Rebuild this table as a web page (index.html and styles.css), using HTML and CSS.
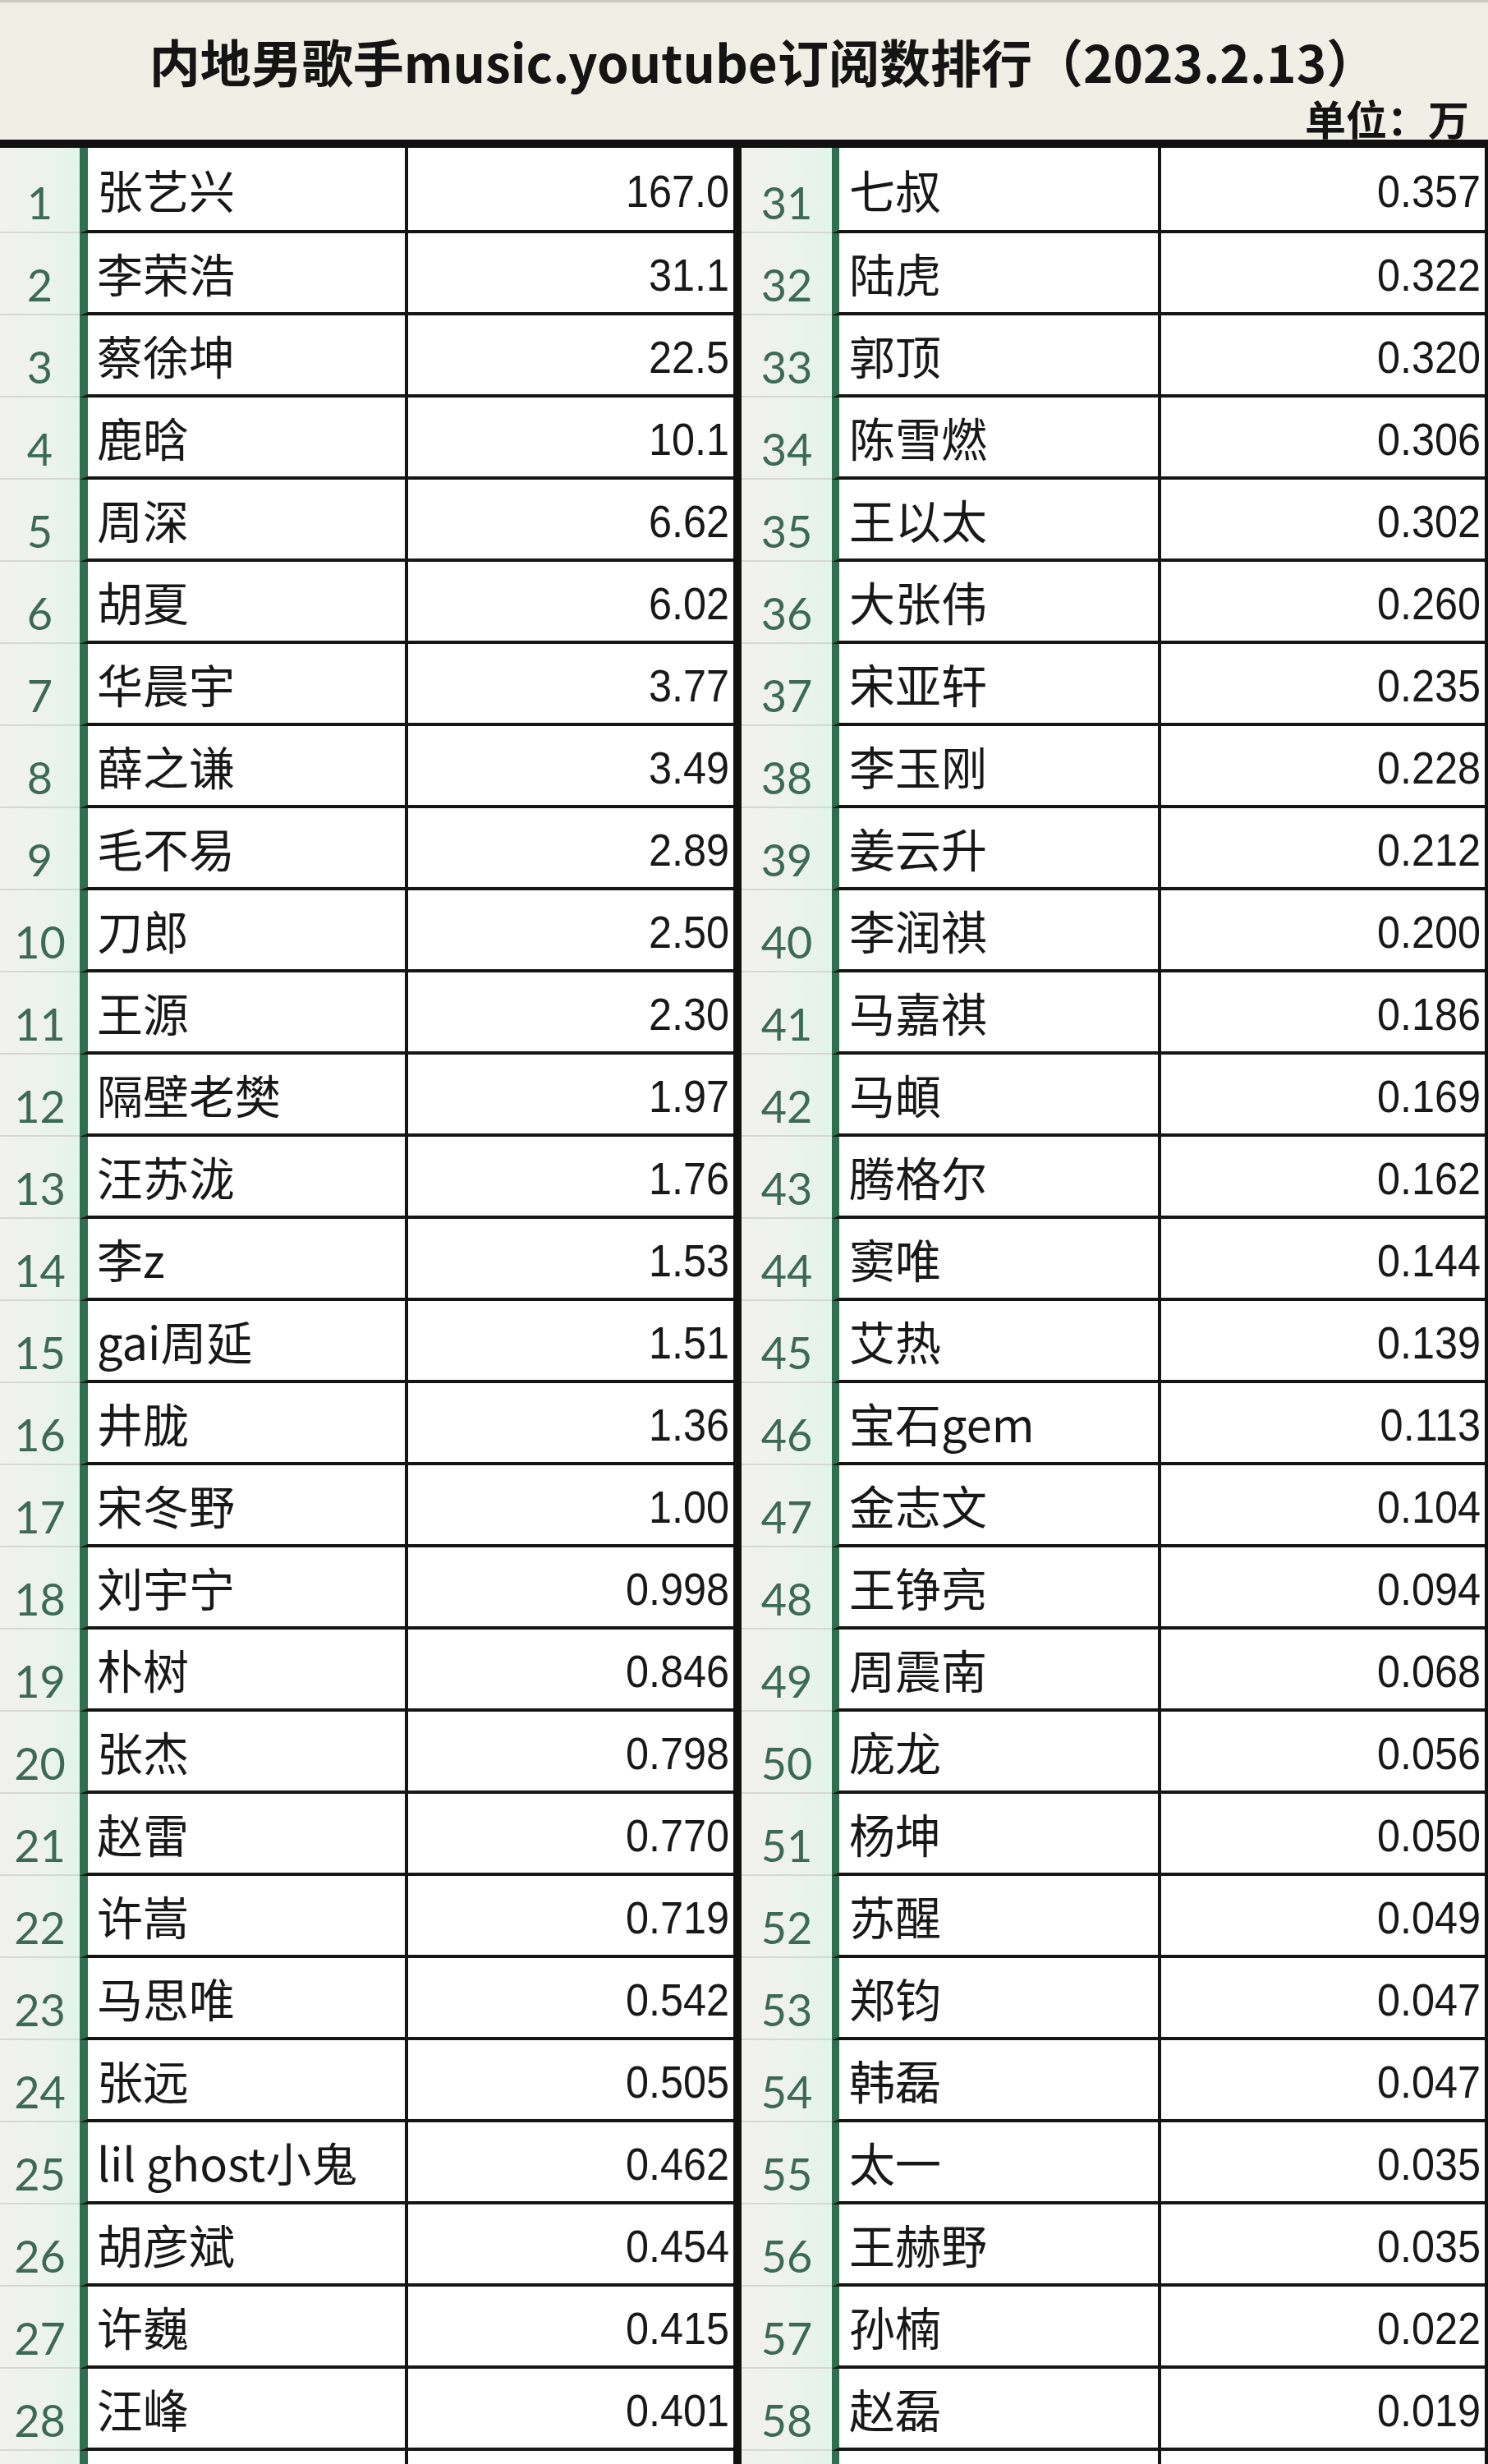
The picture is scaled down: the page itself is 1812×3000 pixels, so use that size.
FILE: index.html
```html
<!DOCTYPE html>
<html lang="zh-CN">
<head>
<meta charset="utf-8">
<title>内地男歌手music.youtube订阅数排行</title>
<link rel="stylesheet" href="styles.css">
</head>
<body>
<div class="page">
  <header class="head">
    <h1 class="title">内地男歌手music.youtube订阅数排行（2023.2.13）</h1>
    <div class="unit">单位：万</div>
  </header>
  <div class="table">
    <div class="half half-left">
      <div class="row"><div class="rank">1</div><div class="cells"><div class="name">张艺兴</div><div class="val"><span>167.0</span></div></div></div>
      <div class="row"><div class="rank">2</div><div class="cells"><div class="name">李荣浩</div><div class="val"><span>31.1</span></div></div></div>
      <div class="row"><div class="rank">3</div><div class="cells"><div class="name">蔡徐坤</div><div class="val"><span>22.5</span></div></div></div>
      <div class="row"><div class="rank">4</div><div class="cells"><div class="name">鹿晗</div><div class="val"><span>10.1</span></div></div></div>
      <div class="row"><div class="rank">5</div><div class="cells"><div class="name">周深</div><div class="val"><span>6.62</span></div></div></div>
      <div class="row"><div class="rank">6</div><div class="cells"><div class="name">胡夏</div><div class="val"><span>6.02</span></div></div></div>
      <div class="row"><div class="rank">7</div><div class="cells"><div class="name">华晨宇</div><div class="val"><span>3.77</span></div></div></div>
      <div class="row"><div class="rank">8</div><div class="cells"><div class="name">薛之谦</div><div class="val"><span>3.49</span></div></div></div>
      <div class="row"><div class="rank">9</div><div class="cells"><div class="name">毛不易</div><div class="val"><span>2.89</span></div></div></div>
      <div class="row"><div class="rank">10</div><div class="cells"><div class="name">刀郎</div><div class="val"><span>2.50</span></div></div></div>
      <div class="row"><div class="rank">11</div><div class="cells"><div class="name">王源</div><div class="val"><span>2.30</span></div></div></div>
      <div class="row"><div class="rank">12</div><div class="cells"><div class="name">隔壁老樊</div><div class="val"><span>1.97</span></div></div></div>
      <div class="row"><div class="rank">13</div><div class="cells"><div class="name">汪苏泷</div><div class="val"><span>1.76</span></div></div></div>
      <div class="row"><div class="rank">14</div><div class="cells"><div class="name">李z</div><div class="val"><span>1.53</span></div></div></div>
      <div class="row"><div class="rank">15</div><div class="cells"><div class="name">gai周延</div><div class="val"><span>1.51</span></div></div></div>
      <div class="row"><div class="rank">16</div><div class="cells"><div class="name">井胧</div><div class="val"><span>1.36</span></div></div></div>
      <div class="row"><div class="rank">17</div><div class="cells"><div class="name">宋冬野</div><div class="val"><span>1.00</span></div></div></div>
      <div class="row"><div class="rank">18</div><div class="cells"><div class="name">刘宇宁</div><div class="val"><span>0.998</span></div></div></div>
      <div class="row"><div class="rank">19</div><div class="cells"><div class="name">朴树</div><div class="val"><span>0.846</span></div></div></div>
      <div class="row"><div class="rank">20</div><div class="cells"><div class="name">张杰</div><div class="val"><span>0.798</span></div></div></div>
      <div class="row"><div class="rank">21</div><div class="cells"><div class="name">赵雷</div><div class="val"><span>0.770</span></div></div></div>
      <div class="row"><div class="rank">22</div><div class="cells"><div class="name">许嵩</div><div class="val"><span>0.719</span></div></div></div>
      <div class="row"><div class="rank">23</div><div class="cells"><div class="name">马思唯</div><div class="val"><span>0.542</span></div></div></div>
      <div class="row"><div class="rank">24</div><div class="cells"><div class="name">张远</div><div class="val"><span>0.505</span></div></div></div>
      <div class="row"><div class="rank">25</div><div class="cells"><div class="name">lil ghost小鬼</div><div class="val"><span>0.462</span></div></div></div>
      <div class="row"><div class="rank">26</div><div class="cells"><div class="name">胡彦斌</div><div class="val"><span>0.454</span></div></div></div>
      <div class="row"><div class="rank">27</div><div class="cells"><div class="name">许巍</div><div class="val"><span>0.415</span></div></div></div>
      <div class="row"><div class="rank">28</div><div class="cells"><div class="name">汪峰</div><div class="val"><span>0.401</span></div></div></div>
      <div class="row"><div class="rank"></div><div class="cells"><div class="name"></div><div class="val"></div></div></div>
    </div>
    <div class="half half-right">
      <div class="row"><div class="rank">31</div><div class="cells"><div class="name">七叔</div><div class="val"><span>0.357</span></div></div></div>
      <div class="row"><div class="rank">32</div><div class="cells"><div class="name">陆虎</div><div class="val"><span>0.322</span></div></div></div>
      <div class="row"><div class="rank">33</div><div class="cells"><div class="name">郭顶</div><div class="val"><span>0.320</span></div></div></div>
      <div class="row"><div class="rank">34</div><div class="cells"><div class="name">陈雪燃</div><div class="val"><span>0.306</span></div></div></div>
      <div class="row"><div class="rank">35</div><div class="cells"><div class="name">王以太</div><div class="val"><span>0.302</span></div></div></div>
      <div class="row"><div class="rank">36</div><div class="cells"><div class="name">大张伟</div><div class="val"><span>0.260</span></div></div></div>
      <div class="row"><div class="rank">37</div><div class="cells"><div class="name">宋亚轩</div><div class="val"><span>0.235</span></div></div></div>
      <div class="row"><div class="rank">38</div><div class="cells"><div class="name">李玉刚</div><div class="val"><span>0.228</span></div></div></div>
      <div class="row"><div class="rank">39</div><div class="cells"><div class="name">姜云升</div><div class="val"><span>0.212</span></div></div></div>
      <div class="row"><div class="rank">40</div><div class="cells"><div class="name">李润祺</div><div class="val"><span>0.200</span></div></div></div>
      <div class="row"><div class="rank">41</div><div class="cells"><div class="name">马嘉祺</div><div class="val"><span>0.186</span></div></div></div>
      <div class="row"><div class="rank">42</div><div class="cells"><div class="name">马頔</div><div class="val"><span>0.169</span></div></div></div>
      <div class="row"><div class="rank">43</div><div class="cells"><div class="name">腾格尔</div><div class="val"><span>0.162</span></div></div></div>
      <div class="row"><div class="rank">44</div><div class="cells"><div class="name">窦唯</div><div class="val"><span>0.144</span></div></div></div>
      <div class="row"><div class="rank">45</div><div class="cells"><div class="name">艾热</div><div class="val"><span>0.139</span></div></div></div>
      <div class="row"><div class="rank">46</div><div class="cells"><div class="name">宝石gem</div><div class="val"><span>0.113</span></div></div></div>
      <div class="row"><div class="rank">47</div><div class="cells"><div class="name">金志文</div><div class="val"><span>0.104</span></div></div></div>
      <div class="row"><div class="rank">48</div><div class="cells"><div class="name">王铮亮</div><div class="val"><span>0.094</span></div></div></div>
      <div class="row"><div class="rank">49</div><div class="cells"><div class="name">周震南</div><div class="val"><span>0.068</span></div></div></div>
      <div class="row"><div class="rank">50</div><div class="cells"><div class="name">庞龙</div><div class="val"><span>0.056</span></div></div></div>
      <div class="row"><div class="rank">51</div><div class="cells"><div class="name">杨坤</div><div class="val"><span>0.050</span></div></div></div>
      <div class="row"><div class="rank">52</div><div class="cells"><div class="name">苏醒</div><div class="val"><span>0.049</span></div></div></div>
      <div class="row"><div class="rank">53</div><div class="cells"><div class="name">郑钧</div><div class="val"><span>0.047</span></div></div></div>
      <div class="row"><div class="rank">54</div><div class="cells"><div class="name">韩磊</div><div class="val"><span>0.047</span></div></div></div>
      <div class="row"><div class="rank">55</div><div class="cells"><div class="name">太一</div><div class="val"><span>0.035</span></div></div></div>
      <div class="row"><div class="rank">56</div><div class="cells"><div class="name">王赫野</div><div class="val"><span>0.035</span></div></div></div>
      <div class="row"><div class="rank">57</div><div class="cells"><div class="name">孙楠</div><div class="val"><span>0.022</span></div></div></div>
      <div class="row"><div class="rank">58</div><div class="cells"><div class="name">赵磊</div><div class="val"><span>0.019</span></div></div></div>
      <div class="row"><div class="rank"></div><div class="cells"><div class="name"></div><div class="val"></div></div></div>
    </div>
  </div>
</div>
</body>
</html>
```
FILE: styles.css
```css
* { box-sizing: border-box; }

html, body {
  margin: 0;
  padding: 0;
  background: #ffffff;
}

.page {
  width: 1812px;
  height: 3000px;
  overflow: hidden;
  font-family: "Noto Sans CJK SC", "Noto Sans", sans-serif;
  color: #161616;
}

/* ---------- header ---------- */
.head {
  height: 180px;
  background: #efefe6;
  border-top: 3px solid #c9c9c0;
  border-bottom: 10px solid #111111;
  padding: 40px 23px 0 14px;
  display: flex;
  flex-direction: column;
}

.title {
  margin: 0;
  padding-left: 56px;
  font-size: 62px;
  line-height: 62px;
  font-weight: 700;
  text-align: center;
  color: #141414;
}

.unit {
  margin-top: 13px;
  font-size: 50px;
  line-height: 50px;
  font-weight: 700;
  text-align: right;
  color: #141414;
}

/* ---------- table ---------- */
.table {
  display: flex;
}

.half {
  display: flex;
  flex-direction: column;
}

.half-left {
  width: 903px;
  border-right: 10px solid #111111;
}

.half-right {
  width: 909px;
  border-right: 4px solid #111111;
}

.row {
  display: flex;
  height: 100px;
  flex: none;
}

.row:first-child {
  height: 104px;
}

.rank {
  flex: none;
  display: flex;
  align-items: flex-end;
  justify-content: center;
  padding-bottom: 8px;
  font-family: "Lato", "Liberation Sans", sans-serif;
  font-size: 54px;
  line-height: 54px;
  color: #3d6a58;
  background: linear-gradient(to right, #f1f1ef 0%, #eff2ef 45%, #e2f4ea 100%);
  border-bottom: 2px solid #d6d8d6;
}

.half-left .rank { width: 97px; }
.half-right .rank { width: 110px; }

.cells {
  flex: 1;
  display: flex;
  border-left: 10px solid #2f6f50;
  border-bottom: 4px solid #151515;
  background: #ffffff;
}

.half-right .cells {
  border-left-width: 9px;
}

.name {
  flex: none;
  display: flex;
  align-items: center;
  padding-left: 11px;
  font-size: 56px;
  line-height: 56px;
  white-space: nowrap;
  color: #181818;
}

.half-left .name { width: 386px; }
.half-right .name { width: 388px; padding-left: 12px; }

.val {
  flex: 1;
  display: flex;
  align-items: center;
  justify-content: flex-end;
  padding: 5px 5px 0 0;
  border-left: 4px solid #151515;
  font-family: "Liberation Sans", Arial, sans-serif;
  font-size: 56px;
  line-height: 56px;
  color: #181818;
}

.val span {
  display: inline-block;
  transform: scaleX(0.9);
  transform-origin: right center;
}
```
